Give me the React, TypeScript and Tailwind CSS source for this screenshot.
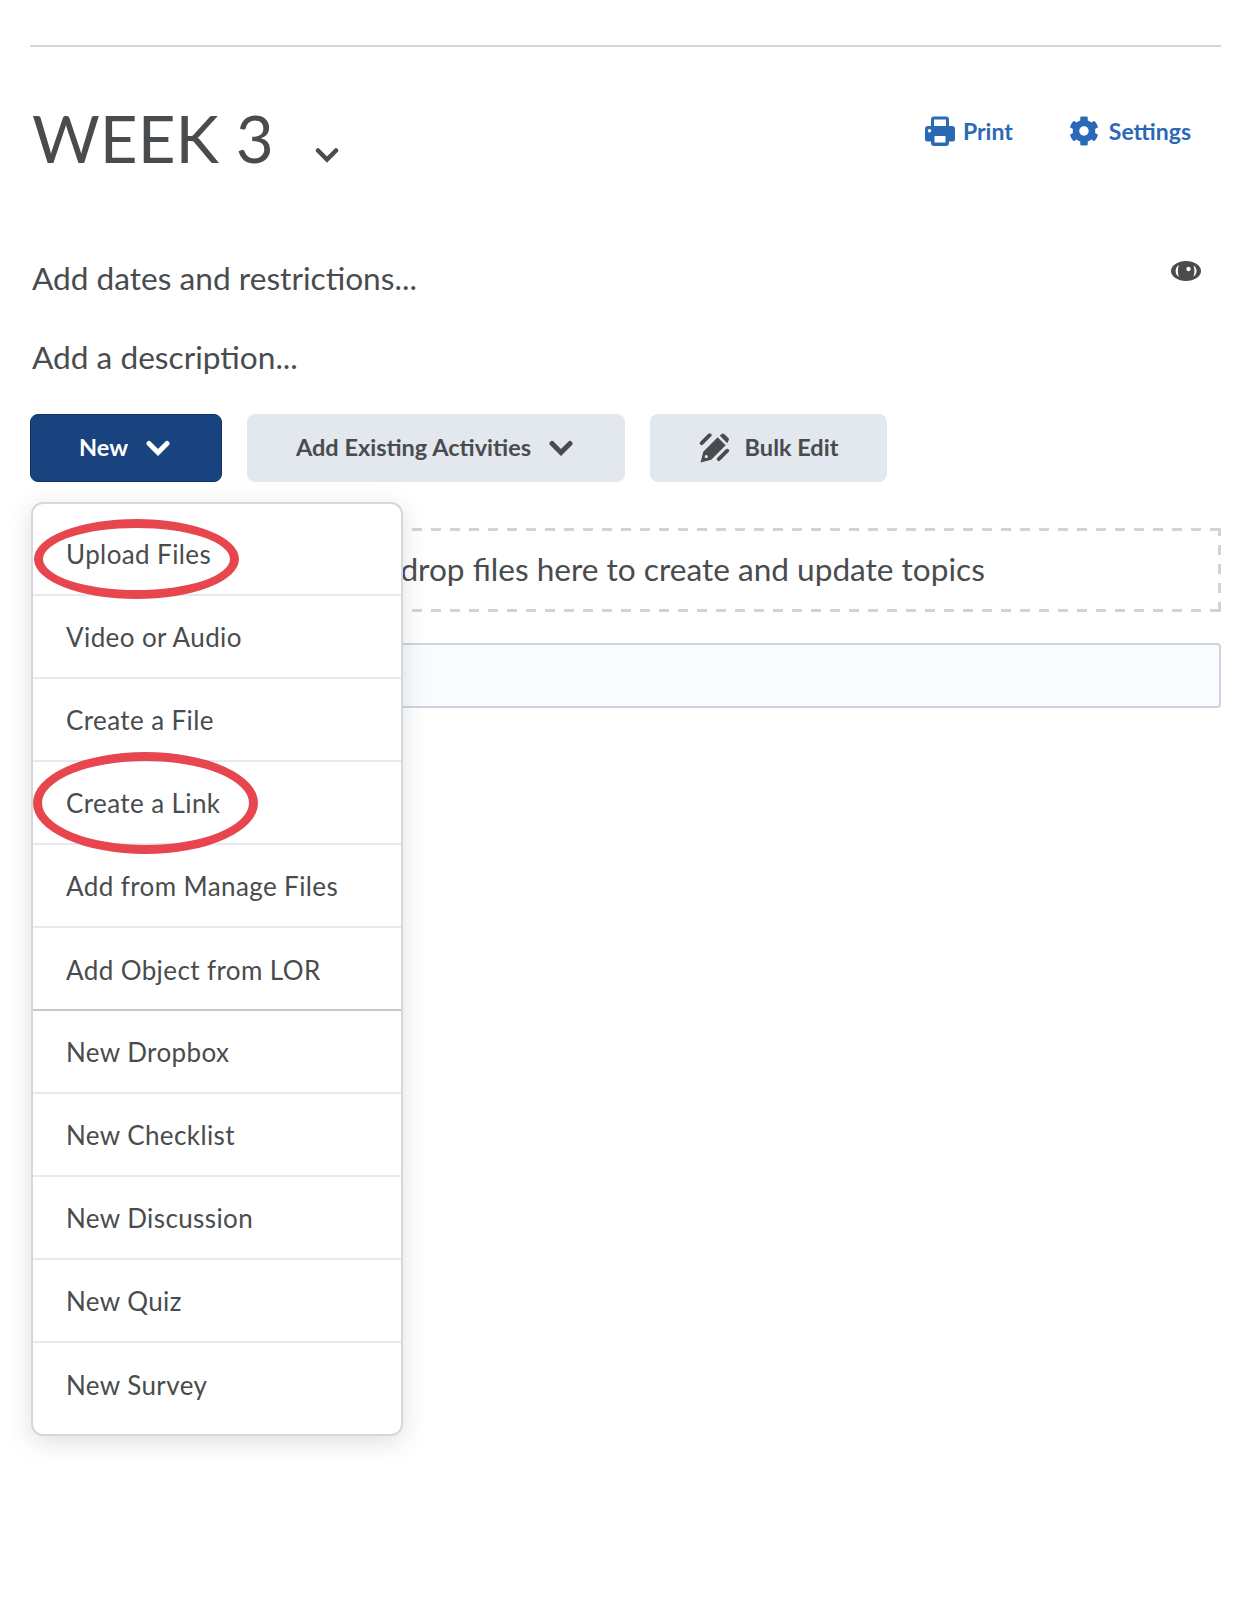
import { FaCog } from 'react-icons/fa';

const topItems = ['Upload Files', 'Video or Audio', 'Create a File', 'Create a Link', 'Add from Manage Files', 'Add Object from LOR'];
const bottomItems = ['New Dropbox', 'New Checklist', 'New Discussion', 'New Quiz', 'New Survey'];

function Chevron({ className, weight = 4.5 }: { className: string; weight?: number }) {
  return (
    <svg viewBox="0 0 24 16" className={className} fill="none" stroke="currentColor" strokeWidth={weight} strokeLinecap="round" strokeLinejoin="miter">
      <path d="M3 3.5 L12 12.5 L21 3.5" />
    </svg>
  );
}

function PrinterIcon() {
  return (
    <svg viewBox="0 0 30 30" className="w-[30px] h-[30px]" fill="#2a69b5">
      <path fillRule="evenodd" d="M6 10V3.5A3 3 0 0 1 9 .5h12a3 3 0 0 1 3 3V10h-3V3.6H9V10H6ZM3 10h24a3 3 0 0 1 3 3v10a2.5 2.5 0 0 1-2.5 2.5H24V27a3 3 0 0 1-3 3H9a3 3 0 0 1-3-3v-1.500H2.500A2.500 2.500 0 0 1 0 23V13a3 3 0 0 1 3-3Zm6.500 10v6.500h11V20h-11ZM4.500 13a1.800 1.800 0 1 0 0 3.600 1.800 1.800 0 0 0 0-3.600Z" />
    </svg>
  );
}

function EyeIcon() {
  return (
    <svg viewBox="0 0 30 20" className="w-[30px] h-[20px]">
      <ellipse cx="15" cy="10" rx="15" ry="10" fill="#494c4e" />
      <path d="M8 4C3.500 6.500 3.500 13.500 8 16C6.500 12.500 6.500 7.500 8 4Z" fill="#fff" />
      <path d="M22.500 4.500C26.500 7 26.500 13 22.500 15.500C23.800 12 23.800 8 22.500 4.500Z" fill="#fff" />
      <circle cx="17.500" cy="8" r="2.200" fill="#fff" />
    </svg>
  );
}

function BulkEditIcon() {
  return (
    <svg viewBox="0 0 30 30" className="w-[32px] h-[32px]" fill="#494c4e">
      <path fillRule="evenodd" d="M1.500 28.500 L4 18.500 L17.500 5 L25 12.500 L11.500 26ZM6.800 21.500a1.500 1.500 0 1 0 0 3 1.500 1.500 0 0 0 0-3Z" />
      <path d="M19.500 3.500 L21 2A2 2 0 0 1 23.800 2L27.500 5.700A2 2 0 0 1 27.500 8.500L26.500 10.500Z" />
      <path d="M2.500 10.500 L10 3" fill="none" stroke="#494c4e" strokeWidth="3.600" strokeLinecap="round" />
      <path d="M18.500 25.500 L26.500 17.500" fill="none" stroke="#494c4e" strokeWidth="3.600" strokeLinecap="round" />
    </svg>
  );
}

function MenuItem({ label, ring, last }: { label: string; ring?: string; last?: boolean }) {
  return (
    <div className={`relative flex items-center pl-[33px] pt-[2px] h-[83px] ${last ? '' : 'border-b-2 border-[#e6eaf0]'}`}>
      <span className="text-[26px] tracking-[0.4px] text-[#494c4e]">{label}</span>
      {ring && <div className={ring} />}
    </div>
  );
}

export default function App() {
  return (
    <div className="min-h-[1600px] bg-white px-[30px] pt-[45px] font-['Lato','Open_Sans',sans-serif] text-[#494c4e]">
      <div className="border-t-2 border-[#cfd6dc]" />

      <div className="flex justify-between mt-[44px] pl-[2px] pr-[30px]">
        <div className="flex items-center h-[94px]">
          <h1 className="text-[65.500px] font-normal leading-none">WEEK 3</h1>
          <Chevron className="w-[24px] h-[16px] ml-[41px] mt-[34px]" />
        </div>
        <div className="flex gap-[56px] mt-[19px] h-[42px] items-center text-[#2a69b5] text-[23px] font-bold">
          <div className="flex items-center gap-[8px]">
            <PrinterIcon />
            <span>Print</span>
          </div>
          <div className="flex items-center gap-[10px]">
            <FaCog className="w-[30px] h-[30px]" />
            <span>Settings</span>
          </div>
        </div>
      </div>

      <div className="flex justify-between items-start mt-[71px] pl-[2px] pr-[20px]">
        <p className="text-[31.650px] leading-[44px]">Add dates and restrictions...</p>
        <div className="mt-[5px]"><EyeIcon /></div>
      </div>
      <p className="mt-[35px] pl-[2px] text-[31.650px] leading-[44px]">Add a description...</p>

      <div className="relative mt-[35px]">
        <div className="flex gap-[25px] text-[23.500px] font-bold">
          <button className="flex items-center justify-center gap-[18px] w-[192px] h-[68px] pr-[3px] rounded-lg bg-[#19437f] border border-[#0f3166] text-white">
            New
            <Chevron className="w-[24px] h-[16px]" weight={5} />
          </button>
          <button className="flex items-center justify-center gap-[18px] w-[378px] h-[68px] pr-[3px] rounded-lg bg-[#e3e7ee]">
            Add Existing Activities
            <Chevron className="w-[24px] h-[16px]" weight={5} />
          </button>
          <button className="flex items-center justify-center gap-[14px] w-[237px] h-[68px] rounded-lg bg-[#e3e7ee]">
            <BulkEditIcon />
            Bulk Edit
          </button>
        </div>

        <div className="absolute z-10 left-[1px] top-full mt-[20px] w-[372px] pt-[9px] pb-[8px] bg-white rounded-xl border-2 border-[#d3d8de] shadow-[0_6px_24px_rgba(73,76,78,0.18)]">
          {topItems.map((label, i) => (
            <MenuItem
              key={label}
              label={label}
              ring={
                i === 0
                  ? 'absolute left-[1px] top-[6px] w-[205px] h-[80px] rounded-[50%] border-[9px] border-[#e8464f]'
                  : i === 3
                    ? 'absolute left-[0px] top-[-10px] w-[225px] h-[102px] rounded-[50%] border-[9px] border-[#e8464f]'
                    : undefined
              }
              last={i === topItems.length - 1}
            />
          ))}
          <div className="-mt-[2px] border-t-2 border-[#c3c9d1]" />
          {bottomItems.map((label, i) => (
            <MenuItem key={label} label={label} last={i === bottomItems.length - 1} />
          ))}
        </div>
      </div>

      <div className="mt-[46px] ml-[2px] pr-[2px] h-[84px] flex items-center justify-center text-[31.600px] [background:repeating-linear-gradient(90deg,#cdd5dc_0_10px,transparent_10px_19px)_top/100%_3px_no-repeat,repeating-linear-gradient(90deg,#cdd5dc_0_10px,transparent_10px_19px)_bottom/100%_3px_no-repeat,repeating-linear-gradient(0deg,#cdd5dc_0_10px,transparent_10px_19px)_right/3px_100%_no-repeat,repeating-linear-gradient(0deg,#cdd5dc_0_10px,transparent_10px_19px)_left/3px_100%_no-repeat]">
        Drag and drop files here to create and update topics
      </div>

      <div className="mt-[31px] ml-[2px] h-[65px] rounded border-2 border-[#cdd5dc] bg-[#f9fbff]" />
    </div>
  );
}
